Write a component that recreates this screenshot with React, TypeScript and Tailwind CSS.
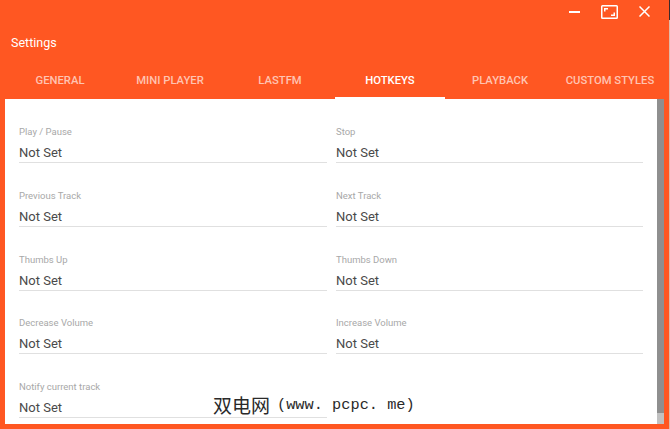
import React from 'react';

const tabs = ['GENERAL', 'MINI PLAYER', 'LASTFM', 'HOTKEYS', 'PLAYBACK', 'CUSTOM STYLES'];

const hotkeys = [
  'Play / Pause',
  'Stop',
  'Previous Track',
  'Next Track',
  'Thumbs Up',
  'Thumbs Down',
  'Decrease Volume',
  'Increase Volume',
  'Notify current track',
];

const HotkeyField: React.FC<{ label: string }> = ({ label }) => (
  <div className="h-[63.8px]">
    <div className="text-[9.5px] leading-[12px] text-[#a8a8a8]">{label}</div>
    <div className="mt-[5px] h-[20px] border-b border-[#e0e0e0] pt-[1px] text-[13px] leading-[18px] text-[#4a4a4a]">Not Set</div>
  </div>
);

export default function App() {
  return (
    <div className="relative flex w-[670px] h-[429px] overflow-hidden font-['Roboto',sans-serif]">
      <div className="w-[669px] h-full bg-[#ff5722]">
        <div className="flex items-start h-[24px] pl-[569px] text-white">
          <svg className="mt-[11px] w-[11px] h-[2px]" viewBox="0 0 11 2" fill="white">
            <rect width="11" height="2" />
          </svg>
          <svg className="mt-[5px] ml-[21px] w-[17px] h-[14px]" viewBox="0 0 17 14" fill="none" stroke="white" strokeWidth="1.5">
            <rect x="0.75" y="0.75" width="15.5" height="12.5" rx="0.8" />
            <path d="M3.75 6.5V3.75H7M13.25 7.5V10.25H10" />
          </svg>
          <svg className="mt-[6px] ml-[21px] w-[11px] h-[11px]" viewBox="0 0 11 11" stroke="white" strokeWidth="1.5">
            <path d="M0.5 0.5L10.5 10.5M10.5 0.5L0.5 10.5" />
          </svg>
        </div>
        <div className="pl-[11px] pt-[11px] h-[42px] text-[12.5px] leading-[16px] text-white">Settings</div>
        <div className="flex h-[33px] pl-[5px] pr-[4px]">
          {tabs.map((tab) => (
            <div
              key={tab}
              className={`relative w-[110px] pt-[8px] text-center text-[11.25px] leading-[13px] font-medium whitespace-nowrap ${
                tab === 'HOTKEYS' ? 'text-white' : 'text-[#ffc4b2]'
              }`}
            >
              {tab}
              {tab === 'HOTKEYS' && <div className="absolute bottom-0 left-0 right-0 h-[2px] bg-white" />}
            </div>
          ))}
        </div>
        <div className="flex h-[325px] ml-[5px] mr-[5px]">
          <div className="flex-1 bg-white pl-[14px] pt-[27px]">
            <div className="grid grid-cols-[308px_307px] gap-x-[9px]">
              {hotkeys.map((label) => (
                <HotkeyField key={label} label={label} />
              ))}
            </div>
          </div>
          <div className="flex w-[7px] flex-col bg-[#8f8f8f]">
            <div className="mt-auto h-[11px] bg-[#c1c1c1]" />
          </div>
        </div>
      </div>
      <div className="flex w-[1px] flex-col bg-[#e3b9a8]">
        <div className="h-[20px] bg-[#3d2a2a]" />
      </div>
      <div className="absolute left-[213px] top-[394px] flex items-center h-[22px] text-[#2a2a2a] whitespace-nowrap">
        <span className="text-[19px] leading-[22px] font-['Noto_Sans_CJK_SC',sans-serif]">双电网</span>
        <span className="ml-[7px] text-[15.3px] leading-[22px] font-['Liberation_Mono',monospace]">(www. pcpc. me)</span>
      </div>
    </div>
  );
}
